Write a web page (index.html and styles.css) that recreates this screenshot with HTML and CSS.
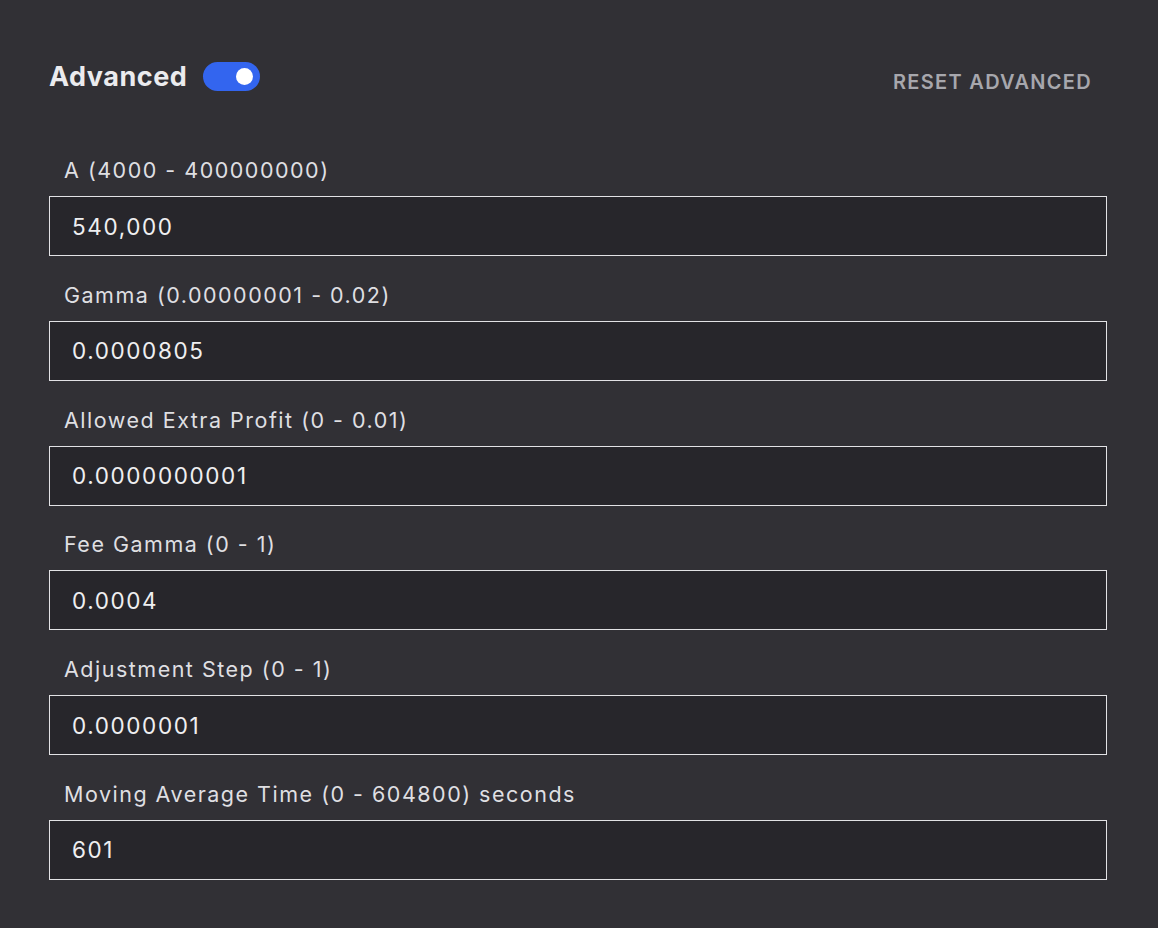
FILE: index.html
```html
<!DOCTYPE html>
<html lang="en">
<head>
<meta charset="utf-8">
<title>Advanced</title>
<link rel="stylesheet" href="styles.css">
</head>
<body>
<div class="panel">
  <div class="head">
    <div class="head-left">
      <h2 class="title">Advanced</h2>
      <span class="toggle"><span class="knob"></span></span>
    </div>
    <button class="reset">Reset Advanced</button>
  </div>
  <div class="fields">
    <div class="field">
      <label class="label">A (4000 - 400000000)</label>
      <div class="input">540,000</div>
    </div>
    <div class="field">
      <label class="label">Gamma (0.00000001 - 0.02)</label>
      <div class="input">0.0000805</div>
    </div>
    <div class="field">
      <label class="label">Allowed Extra Profit (0 - 0.01)</label>
      <div class="input">0.0000000001</div>
    </div>
    <div class="field">
      <label class="label">Fee Gamma (0 - 1)</label>
      <div class="input">0.0004</div>
    </div>
    <div class="field">
      <label class="label">Adjustment Step (0 - 1)</label>
      <div class="input">0.0000001</div>
    </div>
    <div class="field">
      <label class="label">Moving Average Time (0 - 604800) seconds</label>
      <div class="input">601</div>
    </div>
  </div>
</div>
</body>
</html>
```
FILE: styles.css
```css
html, body {
  margin: 0;
  padding: 0;
  background: #313035;
}
body {
  font-family: Inter, "Noto Sans", sans-serif;
  color: #e4e4e7;
}
.panel {
  width: 1058px;
  padding: 59px 51px 0 49px;
}
.head {
  display: flex;
  align-items: center;
  justify-content: space-between;
  height: 36px;
}
.head-left {
  display: flex;
  align-items: center;
  gap: 16px;
}
.title {
  margin: 0;
  font-size: 27px;
  line-height: 36px;
  font-weight: 700;
  letter-spacing: 0.5px;
  color: #ebebee;
}
.toggle {
  display: flex;
  align-items: center;
  justify-content: flex-end;
  width: 57px;
  height: 29px;
  box-sizing: border-box;
  padding-right: 7px;
  border-radius: 15px;
  background: #3365ef;
  margin-top: -2px;
}
.knob {
  width: 17px;
  height: 17px;
  border-radius: 50%;
  background: #ffffff;
}
.reset {
  background: none;
  border: 0;
  padding: 0;
  margin-right: 15px;
  font-family: Inter, "Noto Sans", sans-serif;
  font-size: 20px;
  font-weight: 600;
  letter-spacing: 1.3px;
  text-transform: uppercase;
  color: #a7a7ad;
  margin-top: 9px;
}
.fields {
  display: flex;
  flex-direction: column;
  gap: 26.8px;
  margin-top: 63px;
}
.field {
  display: flex;
  flex-direction: column;
  gap: 14px;
}
.label {
  display: block;
  padding-left: 15px;
  font-size: 21.5px;
  line-height: 24px;
  letter-spacing: 1.5px;
  color: #dfdfe2;
}
.input {
  height: 60px;
  box-sizing: border-box;
  border: 1px solid #e2e2e5;
  background: #27262b;
  padding-left: 22px;
  display: flex;
  align-items: center;
  font-size: 22.5px;
  letter-spacing: 1.6px;
  color: #efeff1;
}
```
